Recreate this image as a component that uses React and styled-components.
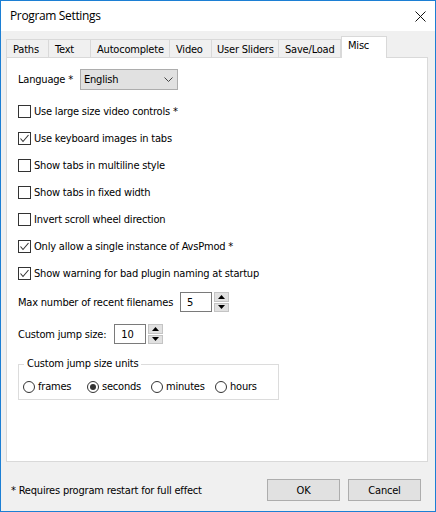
import React from "react";
import styled, { createGlobalStyle } from "styled-components";

const Global = createGlobalStyle`
  html, body { margin: 0; padding: 0; background: #f0f0f0; }
  * { box-sizing: border-box; }
`;

const UI = `"DejaVu Sans Condensed", "DejaVu Sans", sans-serif`;

const Window = styled.div`
  width: 436px;
  height: 512px;
  border: 1px solid #1c7fd4;
  display: flex;
  flex-direction: column;
  background: #f0f0f0;
  font-family: ${UI};
  font-stretch: condensed;
  font-size: 11px;
  letter-spacing: -0.2px;
  color: #000;
`;

const TitleBar = styled.div`
  height: 30px;
  background: #fff;
  display: flex;
  align-items: center;
  justify-content: space-between;
  padding: 0 9px 0 9px;
  flex-shrink: 0;
`;

const Title = styled.div`
  font-family: "Open Sans", "Noto Sans", sans-serif;
  font-stretch: normal;
  font-size: 12px;
  letter-spacing: -0.35px;
  color: #000;
  padding-bottom: 1px;
`;

const Body = styled.div`
  flex: 1;
  display: flex;
  flex-direction: column;
  padding: 5px 7px 0 5px;
`;

const TabRow = styled.div`
  display: flex;
  align-items: flex-end;
  height: 22px;
  position: relative;
  z-index: 1;
  margin-bottom: -1px;
`;

const Tab = styled.div`
  width: ${(p) => p.$w}px;
  height: ${(p) => (p.$active ? 22 : 19)}px;
  border: 1px solid #d9d9d9;
  border-left: ${(p) => (p.$first || p.$active ? "1px solid #d9d9d9" : "none")};
  border-bottom: ${(p) => (p.$active ? "none" : "1px solid #d9d9d9")};
  background: ${(p) => (p.$active ? "#fff" : "#f0f0f0")};
  padding-left: ${(p) => p.$pl}px;
  padding-top: ${(p) => (p.$active ? 2 : 3)}px;
  white-space: nowrap;
  line-height: 13px;
`;

const Panel = styled.div`
  height: 405px;
  border: 1px solid #d9d9d9;
  background: #fff;
  display: flex;
  flex-direction: column;
  padding: 11px 0 0 11px;
`;

const Row = styled.div`
  display: flex;
  align-items: center;
  height: ${(p) => p.$h}px;
  margin-top: ${(p) => p.$mt || 0}px;
`;

const Select = styled.div`
  width: 98px;
  height: 21px;
  background: #e1e1e1;
  border: 1px solid #adadad;
  display: flex;
  align-items: center;
  justify-content: space-between;
  padding: 0 4px 0 3px;
  margin-left: ${(p) => p.$ml}px;
`;

const CheckBox = styled.span`
  width: 13px;
  height: 13px;
  border: 1px solid #333;
  background: #fff;
  display: inline-flex;
  align-items: center;
  justify-content: center;
  margin-right: 3px;
  flex-shrink: 0;
`;

const NumInput = styled.div`
  width: ${(p) => p.$w}px;
  height: 20px;
  border: 1px solid #7a7a7a;
  background: #fff;
  display: flex;
  align-items: center;
  padding-left: 6px;
  margin-left: ${(p) => p.$ml}px;
`;

const Spin = styled.div`
  width: 15px;
  height: 20px;
  margin-left: 2px;
  display: flex;
  flex-direction: column;
  gap: 1px;
`;

const SpinBtn = styled.div`
  flex: 1;
  background: #e1e1e1;
  border: 1px solid #c4c4c4;
  display: flex;
  align-items: center;
  justify-content: center;
`;

const Group = styled.div`
  position: relative;
  width: 261px;
  height: 36px;
  border: 1px solid #dcdcdc;
  margin-top: 20px;
  display: flex;
  align-items: center;
  padding: 9px 0 0 4px;
`;

const GroupLabel = styled.span`
  position: absolute;
  left: 5px;
  top: -8px;
  background: #fff;
  padding: 0 3px;
  line-height: 14px;
`;

const Radio = styled.span`
  width: 12px;
  height: 12px;
  border-radius: 50%;
  border: 1px solid #333;
  background: #fff;
  display: inline-flex;
  align-items: center;
  justify-content: center;
  margin-right: 3px;
  flex-shrink: 0;
  &::after {
    content: "";
    display: ${(p) => (p.$on ? "block" : "none")};
    width: 6px;
    height: 6px;
    border-radius: 50%;
    background: #333;
  }
`;

const RadioItem = styled.label`
  display: flex;
  align-items: center;
  width: ${(p) => p.$w}px;
`;

const Footer = styled.div`
  display: flex;
  align-items: center;
  height: 22px;
  margin-top: 17px;
  padding: 0 7px 0 5px;
`;

const Note = styled.div`
  flex: 1;
`;

const Button = styled.div`
  width: 73px;
  height: 22px;
  background: #e1e1e1;
  border: 1px solid #adadad;
  display: flex;
  align-items: center;
  justify-content: center;
  margin-left: ${(p) => p.$ml || 0}px;
`;

const Check = () => (
  <svg width="11" height="11" viewBox="0 0 11 11">
    <path d="M1.5 5.5 L4 8.5 L9.5 2" fill="none" stroke="#333" strokeWidth="1.1" />
  </svg>
);

const tabs = [
  ["Paths", 43, 6],
  ["Text", 42, 6],
  ["Autocomplete", 79, 6],
  ["Video", 42, 6],
  ["User Sliders", 67, 5],
  ["Save/Load", 62, 6],
];

const checks = [
  ["Use large size video controls *", false],
  ["Use keyboard images in tabs", true],
  ["Show tabs in multiline style", false],
  ["Show tabs in fixed width", false],
  ["Invert scroll wheel direction", false],
  ["Only allow a single instance of AvsPmod *", true],
  ["Show warning for bad plugin naming at startup", true],
];

const Arrow = ({ up }) => (
  <svg width="7" height="4" viewBox="0 0 7 4">
    <path d={up ? "M0 4 L3.5 0 L7 4 Z" : "M0 0 L3.5 4 L7 0 Z"} fill="#000" />
  </svg>
);

const Spinner = () => (
  <Spin>
    <SpinBtn><Arrow up /></SpinBtn>
    <SpinBtn><Arrow /></SpinBtn>
  </Spin>
);

export default function App() {
  return (
    <>
      <Global />
      <Window>
        <TitleBar>
          <Title>Program Settings</Title>
          <svg width="11" height="11" viewBox="0 0 11 11">
            <path d="M0.5 0.5 L10.5 10.5 M10.5 0.5 L0.5 10.5" stroke="#111" strokeWidth="1" />
          </svg>
        </TitleBar>
        <Body>
          <TabRow>
            {tabs.map(([t, w, pl], i) => (
              <Tab key={t} $w={w} $pl={pl} $first={i === 0}>{t}</Tab>
            ))}
            <Tab $w={46} $pl={6} $active>Misc</Tab>
          </TabRow>
          <Panel>
            <Row $h={21}>
              <span>Language *</span>
              <Select $ml={7}>
                <span>English</span>
                <svg width="9" height="5" viewBox="0 0 9 5">
                  <path d="M0.5 0.5 L4.5 4.5 L8.5 0.5" fill="none" stroke="#444" strokeWidth="1" />
                </svg>
              </Select>
            </Row>
            <div style={{ height: 8 }} />
            {checks.map(([t, on]) => (
              <Row key={t} $h={27}>
                <CheckBox>{on && <Check />}</CheckBox>
                <span>{t}</span>
              </Row>
            ))}
            <Row $h={20} $mt={5}>
              <span>Max number of recent filenames</span>
              <NumInput $w={32} $ml={7}>5</NumInput>
              <Spinner />
            </Row>
            <Row $h={20} $mt={12}>
              <span>Custom jump size:</span>
              <NumInput $w={32} $ml={8}>10</NumInput>
              <Spinner />
            </Row>
            <Group>
              <GroupLabel>Custom jump size units</GroupLabel>
              <RadioItem $w={64}><Radio />frames</RadioItem>
              <RadioItem $w={64}><Radio $on />seconds</RadioItem>
              <RadioItem $w={64}><Radio />minutes</RadioItem>
              <RadioItem $w={50}><Radio />hours</RadioItem>
            </Group>
          </Panel>
          <Footer>
            <Note>* Requires program restart for full effect</Note>
            <Button>OK</Button>
            <Button $ml={8}>Cancel</Button>
          </Footer>
        </Body>
      </Window>
    </>
  );
}
